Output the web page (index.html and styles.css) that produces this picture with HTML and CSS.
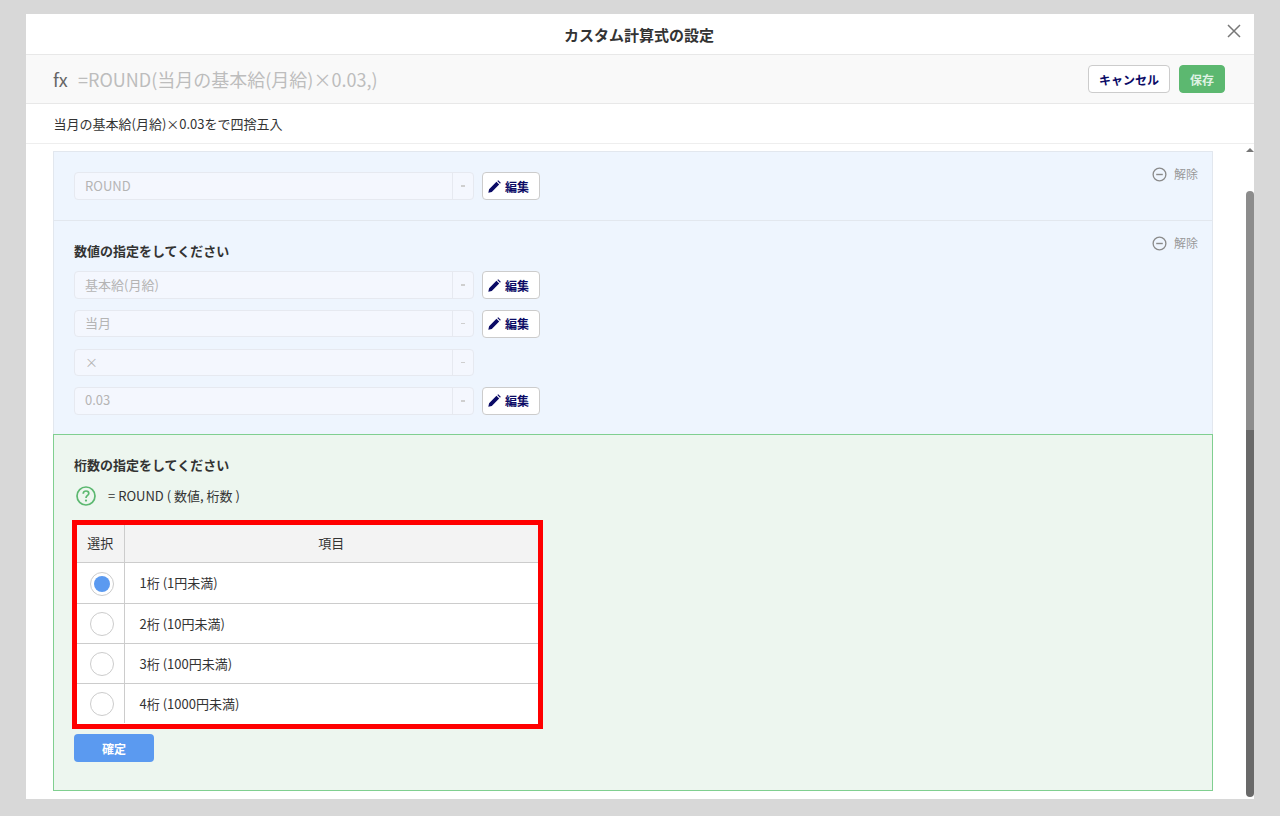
FILE: index.html
```html
<!DOCTYPE html>
<html lang="ja">
<head>
<meta charset="utf-8">
<title>カスタム計算式の設定</title>
<link rel="stylesheet" href="styles.css">
</head>
<body>
<div class="modal">
  <header class="title-bar">
    <h1 class="title">カスタム計算式の設定</h1>
    <svg class="close" viewBox="0 0 14 14" width="14" height="14"><path d="M1 1L13 13M13 1L1 13" stroke="#777" stroke-width="1.5" fill="none"/></svg>
  </header>
  <div class="formula-bar">
    <span class="fx">fx</span>
    <span class="formula">=ROUND(当月の基本給(月給)×0.03,)</span>
    <button class="btn-cancel">キャンセル</button>
    <button class="btn-save">保存</button>
  </div>
  <div class="desc">当月の基本給(月給)×0.03をで四捨五入</div>
  <div class="body">
    <div class="content">
      <section class="panel panel-first">
        <div class="remove"><svg viewBox="0 0 16 16" width="15" height="15"><circle cx="8" cy="8" r="6.8" fill="none" stroke="#8a8a8a" stroke-width="1.4"/><path d="M4.5 8H11.5" stroke="#8a8a8a" stroke-width="1.5"/></svg><span>解除</span></div>
        <div class="row">
          <div class="select"><span class="select-val">ROUND</span><span class="select-arrow"><i></i></span></div>
          <button class="btn-edit"><svg viewBox="0 0 12 12" width="13" height="13"><path d="M0.3 11.7L1 8.5L7.8 1.7L10.3 4.2L3.5 11ZM8.6 0.9L9.4 0.2L11.8 2.6L11.1 3.4Z" fill="#0b0b66"/></svg>編集</button>
        </div>
      </section>
      <section class="panel panel-second">
        <div class="remove"><svg viewBox="0 0 16 16" width="15" height="15"><circle cx="8" cy="8" r="6.8" fill="none" stroke="#8a8a8a" stroke-width="1.4"/><path d="M4.5 8H11.5" stroke="#8a8a8a" stroke-width="1.5"/></svg><span>解除</span></div>
        <h2 class="heading">数値の指定をしてください</h2>
        <div class="rows">
          <div class="row">
            <div class="select"><span class="select-val">基本給(月給)</span><span class="select-arrow"><i></i></span></div>
            <button class="btn-edit"><svg viewBox="0 0 12 12" width="13" height="13"><path d="M0.3 11.7L1 8.5L7.8 1.7L10.3 4.2L3.5 11ZM8.6 0.9L9.4 0.2L11.8 2.6L11.1 3.4Z" fill="#0b0b66"/></svg>編集</button>
          </div>
          <div class="row">
            <div class="select"><span class="select-val">当月</span><span class="select-arrow"><i></i></span></div>
            <button class="btn-edit"><svg viewBox="0 0 12 12" width="13" height="13"><path d="M0.3 11.7L1 8.5L7.8 1.7L10.3 4.2L3.5 11ZM8.6 0.9L9.4 0.2L11.8 2.6L11.1 3.4Z" fill="#0b0b66"/></svg>編集</button>
          </div>
          <div class="row">
            <div class="select"><span class="select-val">×</span><span class="select-arrow"><i></i></span></div>
          </div>
          <div class="row">
            <div class="select"><span class="select-val">0.03</span><span class="select-arrow"><i></i></span></div>
            <button class="btn-edit"><svg viewBox="0 0 12 12" width="13" height="13"><path d="M0.3 11.7L1 8.5L7.8 1.7L10.3 4.2L3.5 11ZM8.6 0.9L9.4 0.2L11.8 2.6L11.1 3.4Z" fill="#0b0b66"/></svg>編集</button>
          </div>
        </div>
      </section>
      <section class="panel-green">
        <h2 class="heading">桁数の指定をしてください</h2>
        <div class="help">
          <svg viewBox="0 0 20 20" width="20" height="20"><circle cx="10" cy="10" r="9" fill="none" stroke="#5cb870" stroke-width="1.7"/><path d="M7.2 7.8C7.2 6 8.5 5 10 5C11.6 5 12.8 6 12.8 7.4C12.8 9.4 10 9.6 10 12" fill="none" stroke="#5cb870" stroke-width="1.7"/><circle cx="10" cy="14.6" r="1.1" fill="#5cb870"/></svg>
          <span>= ROUND ( 数値, 桁数 )</span>
        </div>
        <div class="highlight">
          <table class="options">
            <thead><tr><th class="col-sel">選択</th><th>項目</th></tr></thead>
            <tbody>
              <tr class="row-first"><td class="col-sel"><span class="radio radio-on"></span></td><td>1桁 (1円未満)</td></tr>
              <tr><td class="col-sel"><span class="radio"></span></td><td>2桁 (10円未満)</td></tr>
              <tr><td class="col-sel"><span class="radio"></span></td><td>3桁 (100円未満)</td></tr>
              <tr><td class="col-sel"><span class="radio"></span></td><td>4桁 (1000円未満)</td></tr>
            </tbody>
          </table>
        </div>
        <button class="btn-confirm">確定</button>
      </section>
    </div>
    <div class="scrollbar">
      <span class="arrow-up"></span>
      <span class="thumb-light"></span>
      <span class="thumb-dark"></span>
    </div>
  </div>
</div>
</body>
</html>
```
FILE: styles.css
```css
* { box-sizing: border-box; }
html, body { margin: 0; height: 100%; }
body {
  background: #d8d8d8;
  font-family: "Noto Sans CJK JP", "Noto Sans", sans-serif;
  font-size: 13px;
  color: #333;
  overflow: hidden;
}
button { font-family: inherit; cursor: pointer; padding: 0; }
.modal {
  margin: 14px 0 0 26px;
  width: 1228px;
  height: 785px;
  background: #fff;
  display: flex;
  flex-direction: column;
}
.title-bar {
  height: 41px;
  flex: none;
  border-bottom: 1px solid #e8e8e8;
  display: flex;
  align-items: center;
  justify-content: center;
  position: relative;
}
.title { margin: 0; font-size: 15px; font-weight: 700; color: #333; line-height: 1; position: relative; left: -1px; }
.close { position: absolute; right: 13px; top: 10px; }
.formula-bar {
  height: 49px;
  flex: none;
  background: #f9f9f9;
  border-bottom: 1px solid #e8e8e8;
  display: flex;
  align-items: center;
  padding: 0 29px 0 27px;
}
.fx { font-size: 18px; color: #666; width: 25px; line-height: 1; }
.formula { font-size: 18px; color: #bdbdbd; flex: 1; line-height: 1; }
.btn-cancel {
  width: 82px; height: 28px; margin-right: 9px;
  background: #fff; border: 1px solid #ccc; border-radius: 4px;
  color: #0b0b66; font-weight: 700; font-size: 12px;
}
.btn-save {
  width: 46px; height: 28px;
  background: #5cb870; border: 1px solid #5cb870; border-radius: 4px;
  color: #dff2e3; font-weight: 700; font-size: 12px;
}
.desc {
  height: 40px;
  flex: none;
  border-bottom: 1px solid #eee;
  display: flex;
  align-items: center;
  padding-left: 27.5px;
  font-size: 13px;
  color: #333;
}
.body { flex: 1; min-height: 0; display: flex; }
.content { flex: 1; min-width: 0; padding: 7px 33px 0 27px; }
.panel {
  background: #eef5fe;
  border: 1px solid #e2e7ee;
  border-bottom-width: 0;
  padding: 0 20px;
  position: relative;
}
.panel-first { height: 70px; padding-top: 20px; border-bottom: 1px solid #e2e7ee; }
.panel-second { height: 213px; border-top: 0; padding-top: 21px; }
.remove {
  position: absolute; right: 15px; top: 14px;
  display: flex; align-items: center; gap: 7px;
  color: #999; font-size: 12px; line-height: 16px;
  transform: translateX(1px);
}
.heading { margin: 0; font-size: 13px; font-weight: 700; color: #333; line-height: 18px; }
.rows { display: flex; flex-direction: column; gap: 10.67px; margin-top: 11px; }
.row { display: flex; gap: 8px; align-items: center; height: 28px; }
.select {
  width: 400px; height: 27.5px;
  background: #f4f7fe;
  border: 1px solid #e6e9f0;
  border-radius: 4px;
  display: flex;
  align-items: center;
}
.select-val { flex: 1; padding-left: 10px; color: #b4b4b4; font-size: 13px; line-height: 1; position: relative; top: -1px; }
.select-arrow {
  width: 21px; height: 100%;
  border-left: 1px solid #e6e9f0;
  display: flex; align-items: center; justify-content: center;
}
.select-arrow i { width: 4px; height: 1.5px; background: #cfcfcf; display: block; }
.btn-edit {
  width: 58px; height: 28px;
  background: #fff; border: 1px solid #ccc; border-radius: 4px;
  color: #0b0b66; font-weight: 700; font-size: 12px;
  display: flex; align-items: center; gap: 4px; padding-left: 5px;
}
.panel-green {
  height: 357px;
  background: #edf6ef;
  border: 1px solid #80cf90;
  padding: 21px 20px 0 18px;
}
.panel-green .heading { padding-left: 2px; }
.help {
  display: flex; align-items: center; height: 22px; margin-top: 11px; padding-left: 4px; gap: 12px;
  font-size: 13px; color: #333;
}
.help span { line-height: 1; position: relative; top: -1px; }
.highlight {
  width: 471px;
  height: 209px;
  border: 5px solid #ff0000;
  margin-top: 13px;
  background: #fff;
}
.options { width: 100%; border-collapse: collapse; table-layout: fixed; font-size: 13px; color: #333; }
.options th {
  height: 37px; background: #f3f3f3; font-weight: 400; text-align: center;
  border-bottom: 1px solid #ccc; border-left: 1px solid #ccc; padding: 0 0 2px;
}
.options td {
  height: 40px; padding: 0 0 0 15px; background: #fff;
  border-bottom: 1px solid #ccc; border-left: 1px solid #ccc;
}
.options .row-first td { height: 41px; }
.options tr:last-child td { border-bottom: 0; }
.options .col-sel { width: 47px; border-left: 0; text-align: center; padding: 0 0 0 4px; }
.options th.col-sel { padding: 0 0 2px; }
.radio {
  display: inline-block; width: 24px; height: 24px; border-radius: 50%;
  border: 1px solid #ccc; background: #fff; vertical-align: middle; position: relative; top: 1px;
}
.radio-on::after {
  content: ""; position: absolute; left: 3px; top: 3px; width: 16px; height: 16px;
  border-radius: 50%; background: #5b9af0;
}
.btn-confirm {
  display: block;
  width: 80px; height: 28px; margin: 5px 0 0 2px;
  background: #5b9af0; border: 0; border-radius: 4px;
  color: #fff; font-weight: 700; font-size: 12px;
}
.scrollbar {
  width: 8px; flex: none;
  display: flex; flex-direction: column; align-items: stretch;
}
.arrow-up {
  width: 0; height: 0; margin: 4px 0 0 0;
  border-left: 4px solid transparent; border-right: 4px solid transparent; border-bottom: 4px solid #777;
}
.thumb-light { height: 239px; margin-top: 39px; background: #8c8c8c; border-radius: 4px 4px 0 0; }
.thumb-dark { height: 367px; background: #696969; border-radius: 0 0 4px 4px; }
```
